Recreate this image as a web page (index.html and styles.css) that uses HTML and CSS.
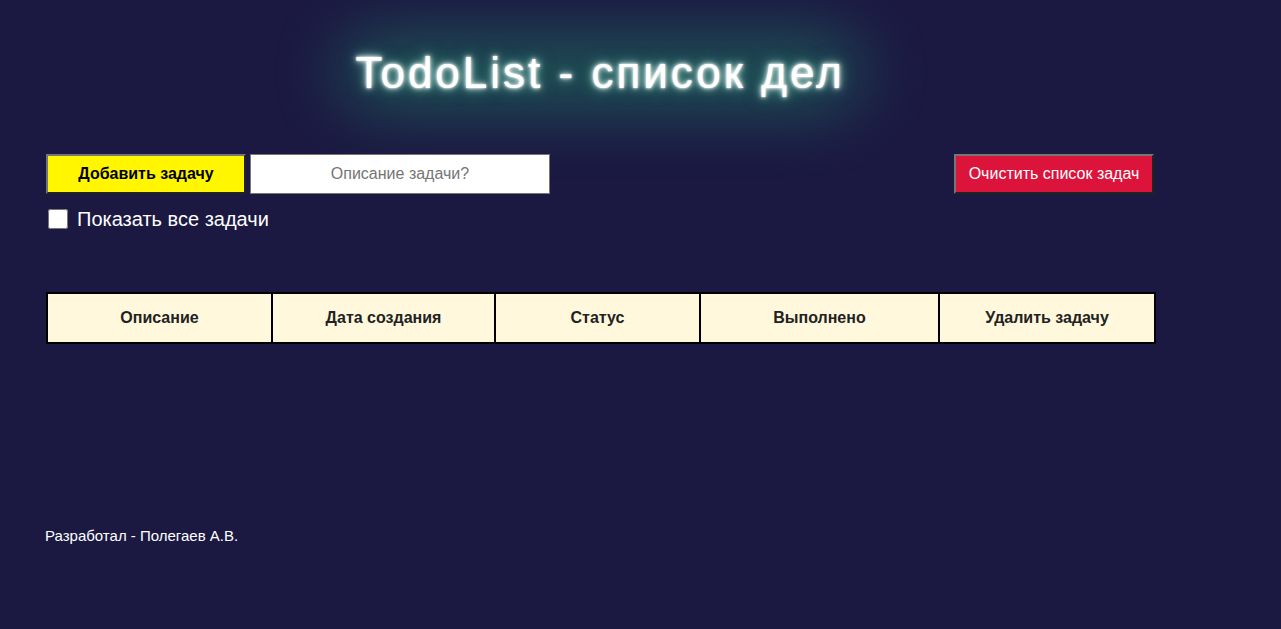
FILE: index.html
```html
<!DOCTYPE html>
<html lang="ru">
<head>
<meta charset="utf-8">
<title>TodoList</title>
<link rel="stylesheet" href="styles.css">
</head>
<body>
<div class="page">
  <h1 class="title"><span class="title-text">TodoList - список дел</span></h1>
  <div class="controls">
    <div class="add-group">
      <button class="btn btn-add">Добавить задачу</button>
      <input class="task-input" type="text" placeholder="Описание задачи?">
    </div>
    <button class="btn btn-clear">Очистить список задач</button>
  </div>
  <label class="show-all">
    <input class="show-all-box" type="checkbox">
    <span>Показать все задачи</span>
  </label>
  <table class="tasks">
    <colgroup>
      <col class="c1"><col class="c2"><col class="c3"><col class="c4"><col class="c5">
    </colgroup>
    <thead>
      <tr>
        <th>Описание</th>
        <th>Дата создания</th>
        <th>Статус</th>
        <th>Выполнено</th>
        <th>Удалить задачу</th>
      </tr>
    </thead>
  </table>
  <footer class="footer">Разработал - Полегаев А.В.</footer>
</div>
</body>
</html>
```

FILE: styles.css
```css
html, body {
  margin: 0;
  padding: 0;
  background: #1b1842;
  font-family: "Liberation Sans", Arial, sans-serif;
  color: #fff;
  overflow: hidden;
}

.page {
  width: 1108px;
  margin-left: 46px;
  padding-top: 48px;
  min-height: 581px;
}

.title {
  position: relative;
  margin: 0;
  font-size: 44px;
  line-height: 50px;
  font-weight: normal;
  letter-spacing: 3px;
  text-align: center;
  color: #fff;
}

.title::before {
  content: "";
  position: absolute;
  left: 295px;
  width: 520px;
  top: -6px;
  height: 60px;
  border-radius: 40px;
  background: #28c078;
  opacity: 0.45;
  filter: blur(36px);
  z-index: 0;
}

.title-text {
  position: relative;
  z-index: 1;
  text-shadow:
    0 0 2px #fff,
    0 0 5px #fff,
    0 0 10px rgba(210, 255, 240, 0.8),
    0 0 18px rgba(60, 210, 170, 0.6);
}

.controls {
  position: relative;
  z-index: 1;
  margin-top: 56px;
  display: flex;
  justify-content: space-between;
  align-items: flex-start;
}

.add-group {
  display: flex;
  gap: 4px;
}

.btn {
  width: 200px;
  height: 40px;
  padding: 0;
  font-family: "Liberation Sans", Arial, sans-serif;
  font-size: 16px;
  border-width: 2px;
  border-style: solid;
  border-color: #767676 #222 #222 #767676;
  cursor: pointer;
}

.btn-add {
  background: #fff600;
  color: #000;
  font-weight: bold;
}

.btn-clear {
  background: #dc143c;
  color: #fff;
}

.task-input {
  box-sizing: border-box;
  width: 300px;
  height: 40px;
  margin: 0;
  padding: 0 8px;
  border: 1px solid #767676;
  background: #fff;
  font-family: "Liberation Sans", Arial, sans-serif;
  font-size: 16px;
  text-align: center;
  color: #222;
}

.task-input::placeholder {
  color: #757575;
}

.show-all {
  margin-top: 15px;
  margin-left: 2px;
  display: flex;
  align-items: center;
  gap: 9px;
  font-size: 20px;
  line-height: 20px;
}

.show-all-box {
  width: 20px;
  height: 20px;
  margin: 0;
}

.tasks {
  margin-top: 63px;
  width: 1108px;
  border-collapse: collapse;
  table-layout: fixed;
  background: #fff8dc;
  color: #222;
}

.tasks th {
  border: 2px solid #000;
  height: 48px;
  padding: 0;
  font-size: 16px;
  font-weight: bold;
  text-align: center;
}

.c1 { width: 225px; }
.c2 { width: 223px; }
.c3 { width: 205px; }
.c4 { width: 239px; }
.c5 { width: 216px; }

.footer {
  margin-top: 183px;
  margin-left: -1px;
  font-size: 15px;
  line-height: 18px;
}
```
